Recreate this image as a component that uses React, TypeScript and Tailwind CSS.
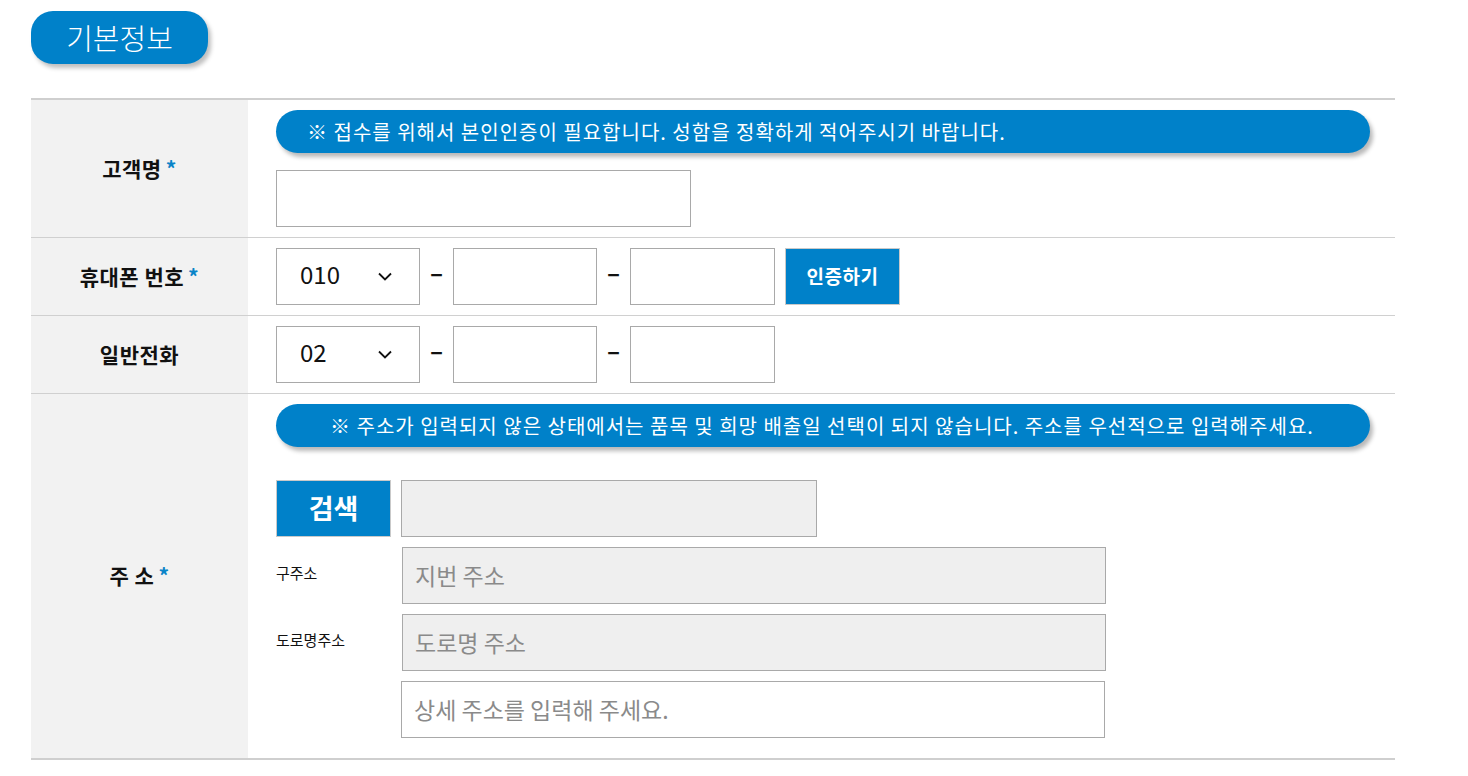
import React from "react";

const font = { fontFamily: '"Noto Sans CJK KR", "Noto Sans", sans-serif' };

const Chevron = () => (
  <svg width="14" height="9" viewBox="0 0 14 9" fill="none">
    <polyline points="1,1.5 7,7.5 13,1.5" stroke="#111" strokeWidth="1.8" />
  </svg>
);

const Notice = ({ text, indent }: { text: string; indent: string }) => (
  <div
    className={`h-[43px] w-[1094px] rounded-full bg-[#0081c9] text-white text-[20px] tracking-[1px] leading-[43px] shadow-[3px_4px_4px_rgba(0,0,0,0.28)] ${indent}`}
  >
    {text}
  </div>
);

const Label = ({ text, star }: { text: string; star?: boolean }) => (
  <div className="w-[217px] shrink-0 bg-[#f2f2f2] flex items-center justify-center text-[21px] tracking-[0.5px] font-bold text-[#111]">
    {text}
    {star && <span className="ml-[4px] text-[#0a84c8]">*</span>}
  </div>
);

const Dash = () => (
  <span className="w-[33px] text-center text-[24px] font-bold leading-none pb-[9px] text-[#111]">–</span>
);

const PhoneRow = ({ code, button }: { code: string; button?: boolean }) => (
  <div className="flex items-center py-[10px] pl-[28px]">
    <div className="w-[144px] h-[57px] border border-[#a9a9a9] flex items-center justify-between pl-[23px] pr-[27px] text-[24px] text-[#111]">
      <span className="pb-[6px]">{code}</span>
      <Chevron />
    </div>
    <Dash />
    <div className="w-[144px] h-[57px] border border-[#a9a9a9] bg-white" />
    <Dash />
    <div className="w-[145px] h-[57px] border border-[#a9a9a9] bg-white" />
    {button && (
      <button className="ml-[10px] w-[115px] h-[57px] bg-[#0081c9] border border-[#c9c9c9] text-white text-[19px] font-bold tracking-[0.5px]">
        인증하기
      </button>
    )}
  </div>
);

export default function App() {
  return (
    <div className="bg-white min-h-[776px] pl-[31px] pt-[11px]" style={font}>
      <div className="w-[177px] h-[53px] rounded-[22px] bg-[#0081c9] text-white text-[29px] font-light flex items-center justify-center shadow-[3px_4px_4px_rgba(0,0,0,0.25)]">
        기본정보
      </div>

      <div className="mt-[34px] w-[1364px] border-t-2 border-b-2 border-[#cfcfcf]">
        <div className="flex border-b border-[#d0d0d0]">
          <Label text="고객명" star />
          <div className="flex flex-col gap-[17px] py-[10px] pl-[28px]">
            <Notice text="※ 접수를 위해서 본인인증이 필요합니다. 성함을 정확하게 적어주시기 바랍니다." indent="pl-[31px]" />
            <div className="w-[415px] h-[57px] border border-[#a9a9a9] bg-white" />
          </div>
        </div>

        <div className="flex border-b border-[#d0d0d0]">
          <Label text="휴대폰 번호" star />
          <PhoneRow code="010" button />
        </div>

        <div className="flex border-b border-[#d0d0d0]">
          <Label text="일반전화" />
          <PhoneRow code="02" />
        </div>

        <div className="flex">
          <Label text="주 소" star />
          <div className="flex flex-col pt-[10px] pb-[20px] pl-[28px]">
            <Notice text="※ 주소가 입력되지 않은 상태에서는 품목 및 희망 배출일 선택이 되지 않습니다. 주소를 우선적으로 입력해주세요." indent="pl-[54px]" />
            <div className="mt-[33px] flex gap-[10px]">
              <button className="w-[115px] h-[57px] bg-[#0081c9] border border-[#c9c9c9] text-white text-[27px] font-bold">
                검색
              </button>
              <div className="w-[416px] h-[57px] border border-[#a9a9a9] bg-[#efefef]" />
            </div>
            <div className="mt-[10px] flex">
              <span className="w-[126px] pt-[15px] text-[15px] text-[#111]">구주소</span>
              <div className="w-[704px] h-[57px] border border-[#a9a9a9] bg-[#efefef] flex items-center pl-[12px] text-[23px] text-[#8a8a8a]">
                지번 주소
              </div>
            </div>
            <div className="mt-[10px] flex">
              <span className="w-[126px] pt-[15px] text-[15px] text-[#111]">도로명주소</span>
              <div className="w-[704px] h-[57px] border border-[#a9a9a9] bg-[#efefef] flex items-center pl-[12px] text-[23px] text-[#8a8a8a]">
                도로명 주소
              </div>
            </div>
            <div className="mt-[10px] flex pl-[125px]">
              <div className="w-[704px] h-[57px] border border-[#a9a9a9] bg-white flex items-center pl-[12px] text-[23px] text-[#8a8a8a]">
                상세 주소를 입력해 주세요.
              </div>
            </div>
          </div>
        </div>
      </div>
    </div>
  );
}
